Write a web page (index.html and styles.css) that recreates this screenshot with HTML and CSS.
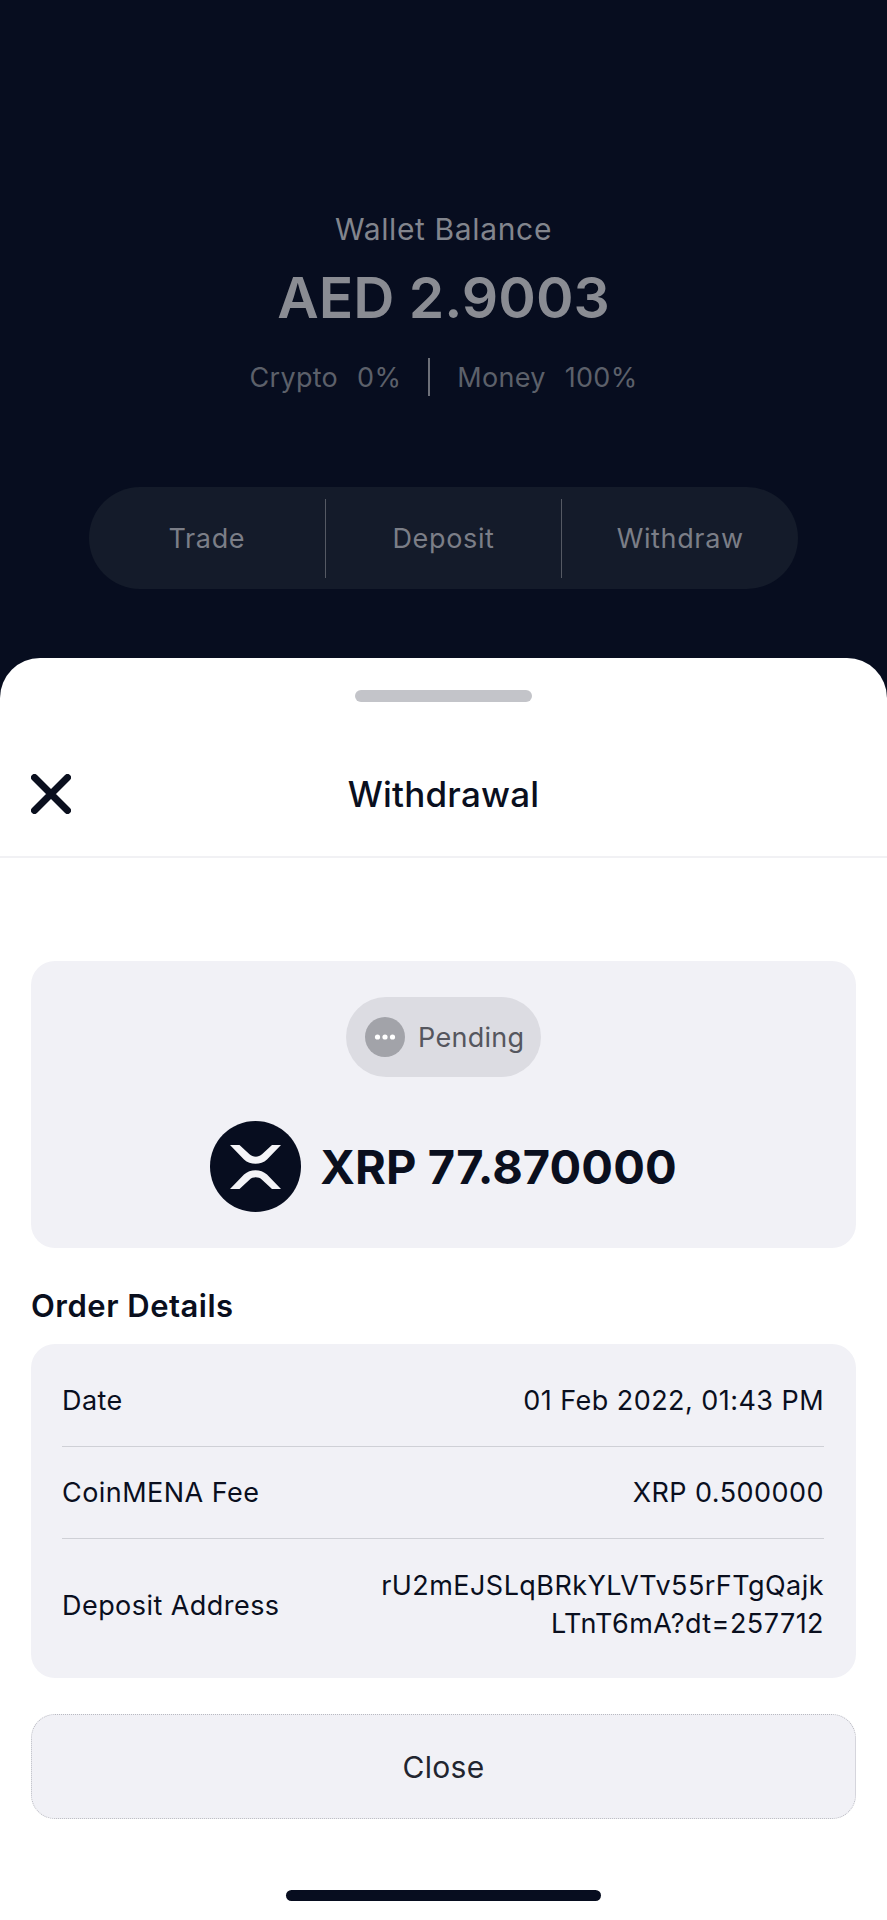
FILE: index.html
```html
<!DOCTYPE html>
<html lang="en">
<head>
  <meta charset="UTF-8">
  <meta name="viewport" content="width=device-width, initial-scale=1.0">
  <title>Withdrawal</title>
  <link rel="stylesheet" href="styles.css">
</head>
<body>
  <div class="screen">
    <section class="wallet">
      <div class="wallet-label">Wallet Balance</div>
      <div class="wallet-amount">AED 2.9003</div>
      <div class="split">
        <span class="split-item">Crypto<span class="split-value">0%</span></span>
        <span class="split-line"></span>
        <span class="split-item">Money<span class="split-value">100%</span></span>
      </div>
      <div class="actions">
        <div class="action">Trade</div>
        <div class="action">Deposit</div>
        <div class="action">Withdraw</div>
      </div>
    </section>

    <section class="sheet">
      <div class="handle"></div>
      <header class="sheet-head">
        <svg class="close-icon" viewBox="0 0 40 40" aria-hidden="true">
          <path d="M3.500 3.500 L36.500 36.500 M36.500 3.500 L3.500 36.500"/>
        </svg>
        <h1 class="sheet-title">Withdrawal</h1>
      </header>

      <div class="sheet-body">
        <div class="hero">
          <div class="status">
            <svg class="status-icon" viewBox="0 0 40 40" aria-hidden="true">
              <circle class="status-disc" cx="20" cy="20" r="20"/>
              <circle class="status-dot" cx="12.5" cy="20" r="2.6"/>
              <circle class="status-dot" cx="20" cy="20" r="2.6"/>
              <circle class="status-dot" cx="27.5" cy="20" r="2.6"/>
            </svg>
            <span>Pending</span>
          </div>
          <div class="hero-amount">
            <svg class="coin" viewBox="0 0 91 91" aria-hidden="true">
              <circle class="coin-disc" cx="45.5" cy="45.5" r="45.5"/>
              <path class="coin-mark" d="M20 24h9.500l10 9.300c3.500 3.200 9 3.200 12.500 0L62 24H71L57 38.500c-6.300 5.800-16.700 5.800-23 0z"/>
              <path class="coin-mark" d="M20 68h9.500l10-9.300c3.500-3.200 9-3.200 12.500 0L62 68H71L57 53.500c-6.300-5.800-16.700-5.800-23 0z"/>
            </svg>
            <span>XRP 77.870000</span>
          </div>
        </div>

        <h2 class="details-title">Order Details</h2>
        <div class="details">
          <div class="row">
            <span>Date</span>
            <span class="row-value">01 Feb 2022, 01:43 PM</span>
          </div>
          <div class="row">
            <span>CoinMENA Fee</span>
            <span class="row-value">XRP 0.500000</span>
          </div>
          <div class="row row-tall">
            <span>Deposit Address</span>
            <span class="row-value">rU2mEJSLqBRkYLVTv55rFTgQajk<br>LTnT6mA?dt=257712</span>
          </div>
        </div>

        <button class="close-btn">Close</button>
      </div>
      <div class="home-bar"></div>
    </section>
  </div>
</body>
</html>
```

FILE: styles.css
```css
* { box-sizing: border-box; }
body { margin: 0; font-family: Inter, "Liberation Sans", sans-serif; background: #070d1f; color: #0a0f1e; }
.screen { width: 887px; height: 1920px; display: flex; flex-direction: column; background: #070d1f; overflow: hidden; }

/* wallet behind the sheet */
.wallet { height: 658px; padding-top: 209px; display: flex; flex-direction: column; align-items: center; }
.wallet-label { font-size: 30px; line-height: 40px; letter-spacing: 0.64px; color: #82858d; }
.wallet-amount { margin-top: 15px; font-size: 57px; line-height: 68px; font-weight: 600; color: #8a8c93; }
.split { margin-top: 26px; display: flex; align-items: center; gap: 27px; height: 38px; font-size: 27px; letter-spacing: 0.3px; color: #5c606a; }
.split-item { display: flex; gap: 19px; }
.split-line { width: 2px; height: 38px; background: #6d7079; }
.actions { margin-top: 91px; width: 709px; height: 102px; display: flex; align-items: center; background: #141b2a; border-radius: 51px; }
.action { flex: 1; height: 79px; display: flex; align-items: center; justify-content: center; font-size: 27px; letter-spacing: 0.65px; color: #7b7e87; border-left: 1px solid #555963; }
.action:first-child { border-left: none; }

/* bottom sheet */
.sheet { flex: 1; background: #fff; border-radius: 40px 40px 0 0; padding-top: 32px; }
.handle { width: 177px; height: 12px; margin: 0 auto; background: #c3c4c9; border-radius: 6px; }
.sheet-head { position: relative; height: 156px; padding-top: 30px; display: flex; align-items: center; justify-content: center; border-bottom: 2px solid #f1f1f4; }
.close-icon { position: absolute; left: 31px; top: 72px; width: 40px; height: 40px; fill: none; stroke: #0a0f1e; stroke-width: 7; stroke-linecap: round; }
.sheet-title { margin: 0; font-size: 35px; line-height: 44px; font-weight: 500; letter-spacing: 0.2px; }
.sheet-body { padding: 0 31px; }

.hero { margin-top: 103px; height: 287px; padding-top: 36px; display: flex; flex-direction: column; align-items: center; gap: 44px; background: #f1f1f6; border-radius: 24px; }
.status { width: 195px; height: 80px; padding-left: 19px; display: flex; align-items: center; gap: 13px; background: #dcdce2; border-radius: 40px; font-size: 27px; letter-spacing: 0.3px; color: #55565e; }
.status-icon { width: 40px; height: 40px; flex: none; }
.status-disc { fill: #a2a3a9; }
.status-dot { fill: #fff; }
.hero-amount { display: flex; align-items: center; gap: 19px; font-size: 47px; font-weight: 700; letter-spacing: 0.1px; }
.coin { width: 91px; height: 91px; flex: none; }
.coin-disc { fill: #070d1f; }
.coin-mark { fill: #f4f4f7; }

.details-title { margin: 40px 0 20px; font-size: 31px; line-height: 36px; font-weight: 600; letter-spacing: 0.5px; }
.details { padding: 11px 32px 7px 31px; background: #f1f1f6; border-radius: 24px; font-size: 27px; letter-spacing: 0.45px; }
.row { height: 92px; display: flex; align-items: center; justify-content: space-between; border-bottom: 1px solid #cfd0d6; }
.row-tall { height: 132px; border-bottom: none; }
.row-value { text-align: right; line-height: 38px; }

.close-btn { display: block; width: 100%; height: 105px; margin-top: 36px; background: #f1f1f6; border: 1px dotted #b9bac1; border-radius: 24px; font-family: inherit; font-size: 30px; letter-spacing: 0.3px; color: #22252f; }
.home-bar { width: 315px; height: 11px; margin: 71px auto 0; background: #070d1f; border-radius: 6px; }
```
